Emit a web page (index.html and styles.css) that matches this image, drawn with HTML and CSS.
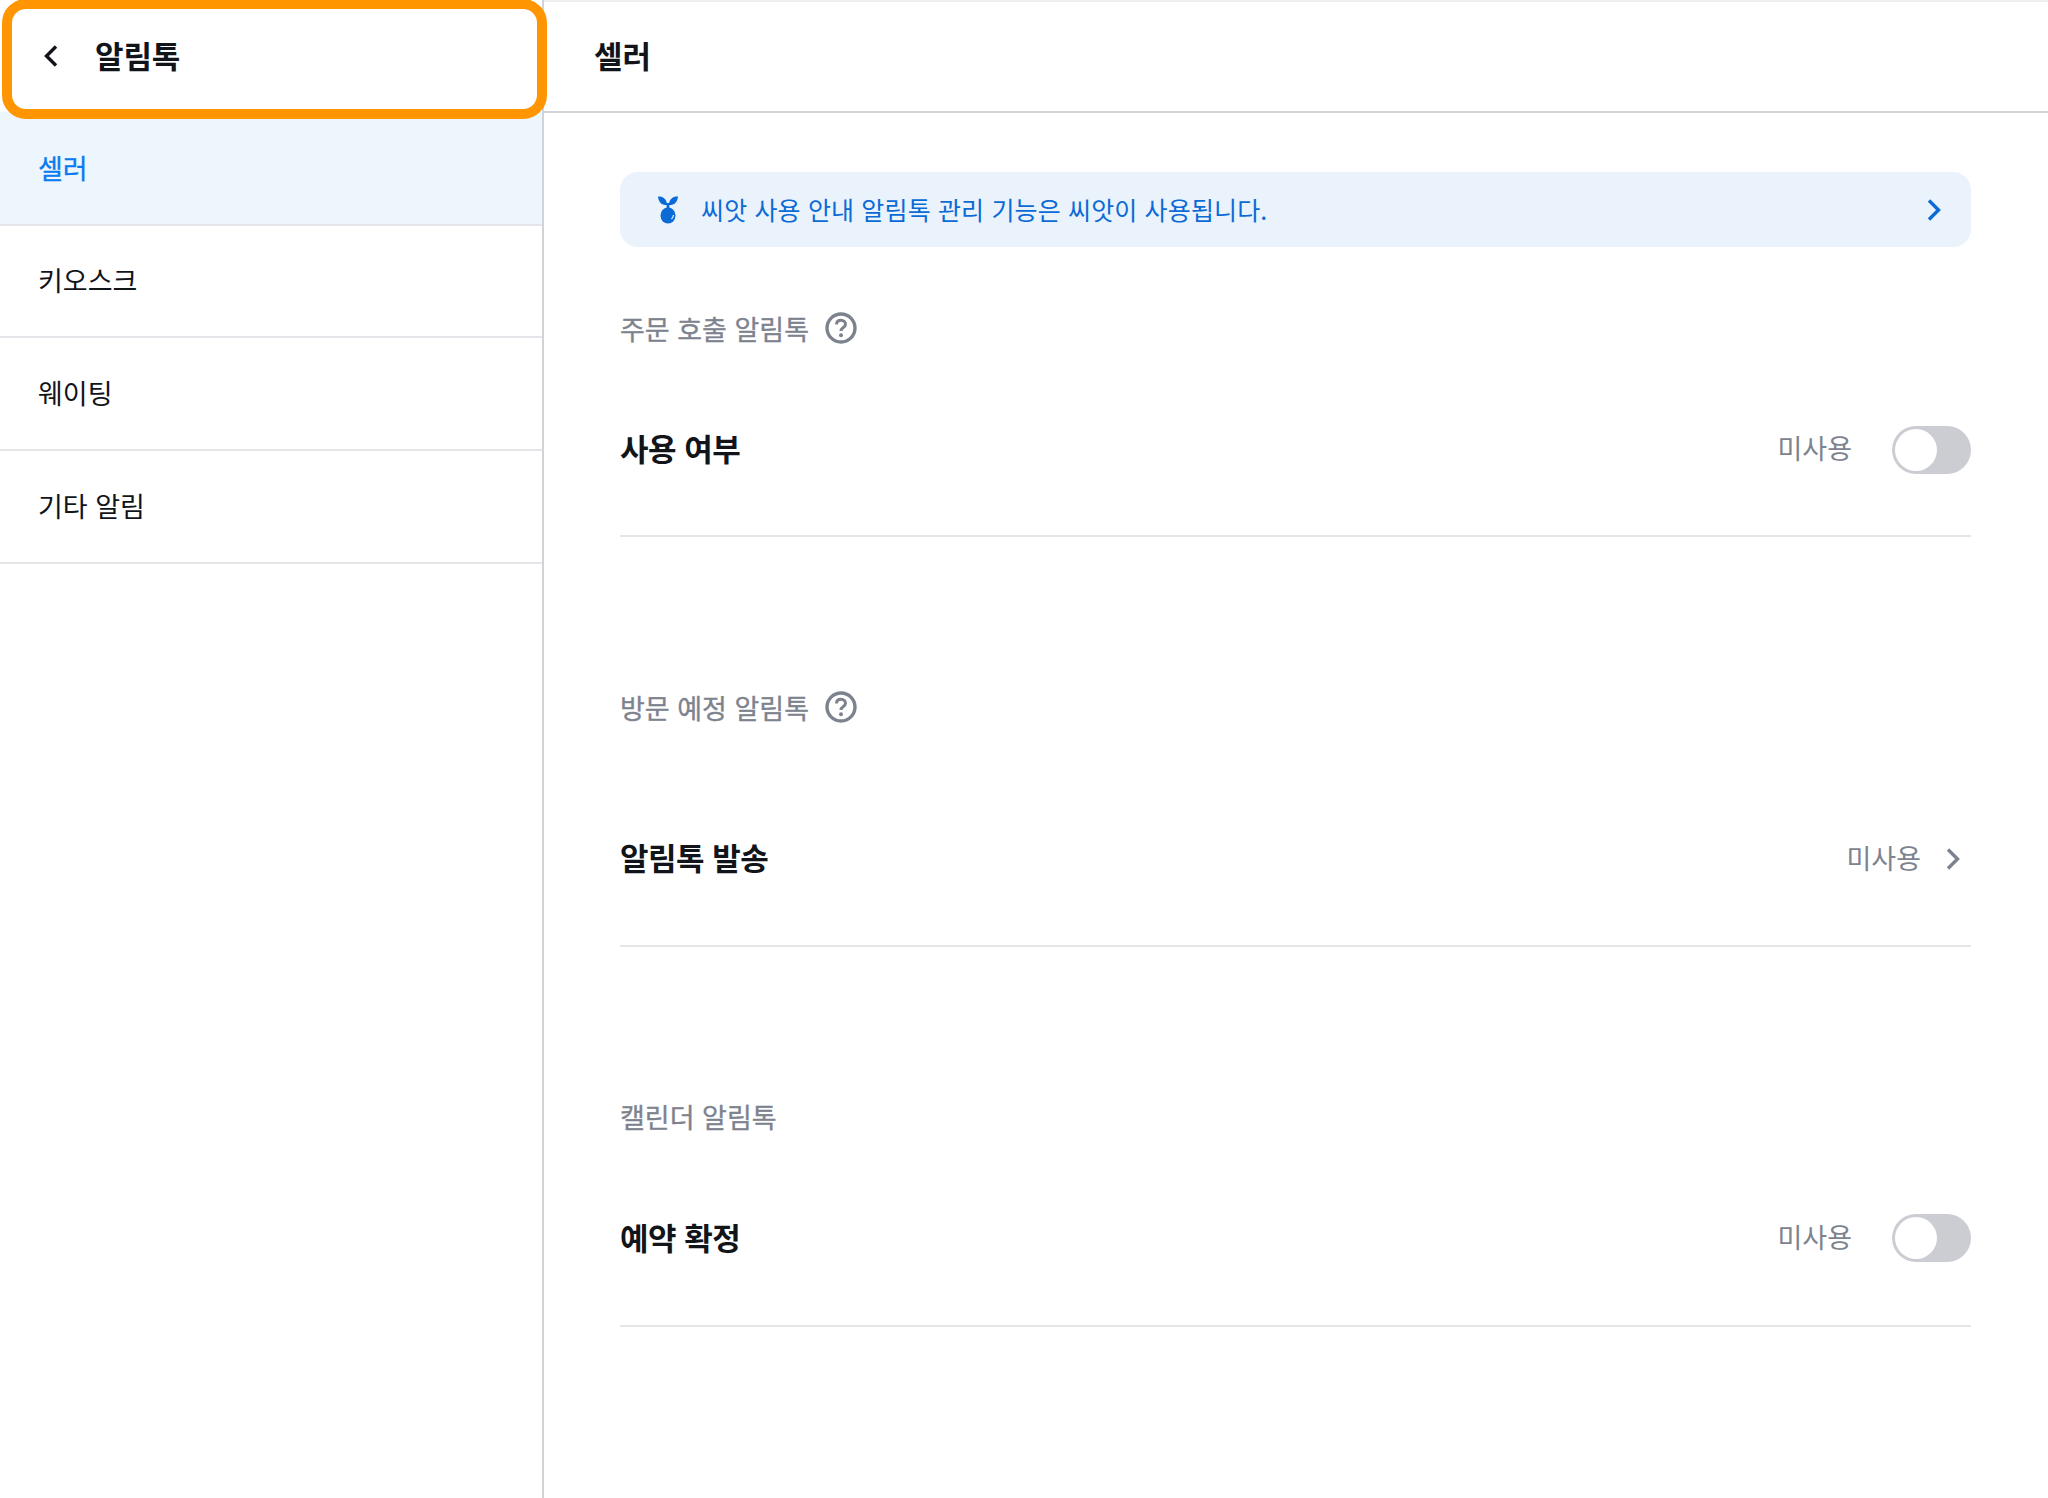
FILE: index.html
```html
<!DOCTYPE html>
<html lang="ko">
<head>
<meta charset="utf-8">
<title>알림톡</title>
<link rel="stylesheet" href="styles.css">
</head>
<body>
<div class="app">
  <aside class="sidebar">
    <header class="side-head">
      <svg class="back" width="16" height="22" viewBox="0 0 16 22"><path d="M14 1.5 L4.5 11 L14 20.5" fill="none" stroke="#111418" stroke-width="3.4"/></svg>
      <h1 class="head-title">알림톡</h1>
      <div class="highlight"></div>
    </header>
    <nav class="menu">
      <div class="menu-item active">셀러</div>
      <div class="menu-item">키오스크</div>
      <div class="menu-item">웨이팅</div>
      <div class="menu-item">기타 알림</div>
    </nav>
  </aside>
  <main class="main">
    <header class="main-head"><h2 class="head-title">셀러</h2></header>
    <div class="content">
      <div class="banner">
        <svg class="seed" width="24" height="28" viewBox="0 0 24 28"><path d="M2 0.5 C6 0 10.5 2 11.3 9 C6.5 9.5 2.5 7 2 0.5 Z M22 0.5 C18 0 13.5 2 12.7 9 C17.5 9.5 21.5 7 22 0.5 Z" fill="#0b6bd6"/><rect x="10.6" y="7" width="2.8" height="6" fill="#0b6bd6"/><ellipse cx="12" cy="19.5" rx="7.5" ry="8" fill="#0b6bd6"/><path d="M15.5 23 Q17.3 21.5 17.5 19" fill="none" stroke="#eaf2fc" stroke-width="1.2"/></svg>
        <span class="banner-text">씨앗 사용 안내 알림톡 관리 기능은 씨앗이 사용됩니다.</span>
        <svg class="banner-arrow" width="14" height="22" viewBox="0 0 14 22"><path d="M2 1.5 L11.5 11 L2 20.5" fill="none" stroke="#0b6bd6" stroke-width="3.4"/></svg>
      </div>

      <section class="section first">
        <div class="sec-title">주문 호출 알림톡
          <svg class="help" width="32" height="32" viewBox="0 0 32 32"><circle cx="16" cy="16" r="14" fill="none" stroke="#7d838e" stroke-width="3.4"/><path d="M11.5 12.5 C11.5 9.5 13.5 8.3 16 8.3 C18.5 8.3 20.5 10 20.5 12.3 C20.5 15.5 16 15.5 16 19" fill="none" stroke="#7d838e" stroke-width="3"/><circle cx="16" cy="23.2" r="2" fill="#7d838e"/></svg>
        </div>
        <div class="row">
          <span class="row-label">사용 여부</span>
          <span class="row-value toggle-gap">미사용</span>
          <span class="toggle"><span class="knob"></span></span>
        </div>
      </section>

      <section class="section second">
        <div class="sec-title">방문 예정 알림톡
          <svg class="help" width="32" height="32" viewBox="0 0 32 32"><circle cx="16" cy="16" r="14" fill="none" stroke="#7d838e" stroke-width="3.4"/><path d="M11.5 12.5 C11.5 9.5 13.5 8.3 16 8.3 C18.5 8.3 20.5 10 20.5 12.3 C20.5 15.5 16 15.5 16 19" fill="none" stroke="#7d838e" stroke-width="3"/><circle cx="16" cy="23.2" r="2" fill="#7d838e"/></svg>
        </div>
        <div class="row row-tall">
          <span class="row-label">알림톡 발송</span>
          <span class="row-value">미사용</span>
          <svg class="row-arrow" width="14" height="22" viewBox="0 0 14 22"><path d="M2 1.5 L11.5 11 L2 20.5" fill="none" stroke="#7d838e" stroke-width="3.4"/></svg>
        </div>
      </section>

      <section class="section third">
        <div class="sec-title">캘린더 알림톡</div>
        <div class="row row-last">
          <span class="row-label">예약 확정</span>
          <span class="row-value toggle-gap">미사용</span>
          <span class="toggle"><span class="knob"></span></span>
        </div>
      </section>
    </div>
  </main>
</div>
</body>
</html>
```
FILE: styles.css
```css
* { box-sizing: border-box; }
html, body { margin: 0; padding: 0; background: #fff; }
body { font-family: "Noto Sans CJK KR", "Noto Sans", sans-serif; color: #111418; }
.app { display: flex; height: 1498px; overflow: hidden; }
.sidebar { width: 544px; flex: none; border-right: 2px solid #d0d3d8; }
.side-head { position: relative; display: flex; align-items: center; height: 112px; padding: 0 0 0 42px; gap: 37px; }
.back { flex: none; }
.head-title { margin: 0 0 3px; font-size: 31px; font-weight: 700; line-height: 1.4; letter-spacing: -0.1px; }
.highlight { position: absolute; left: 2px; top: -1px; width: 545px; height: 120px; border: 10px solid #ff9500; border-radius: 24px; z-index: 2; }
.menu-item { height: 113px; display: flex; align-items: center; padding: 0 0 2px 38px; font-size: 27px; border-bottom: 2px solid #e3e5e8; }
.menu-item.active { height: 114px; background: #edf5fd; color: #0a7cf2; -webkit-text-stroke: 0.3px #0a7cf2; }
.menu-item.active + .menu-item { height: 112px; padding-bottom: 3px; }
.main { flex: 1; min-width: 0; border-top: 2px solid #eceef0; }
.main-head { height: 111px; padding-left: 50px; border-bottom: 2px solid #d0d3d8; display: flex; align-items: center; }
.content { padding: 59px 77px 0 76px; }
.banner { display: flex; align-items: center; height: 75px; padding: 0 30px 0 36px; border-radius: 18px; background: #eaf2fc; color: #0b6bd6; }
.seed { flex: none; }
.banner-text { flex: 1; margin: 0 0 2px 21px; font-size: 25px; letter-spacing: 0.15px; }
.sec-title { display: flex; align-items: center; gap: 16px; height: 40px; font-size: 27px; color: #7d838e; -webkit-text-stroke: 0.35px #7d838e; }
.help { flex: none; }
.row { display: flex; align-items: center; height: 189px; padding-top: 11px; border-bottom: 2px solid #e3e5e8; }
.first { margin-top: 61px; }
.first .toggle { margin-top: 5px; }
.first .row-value { margin-top: 1px; }
.second { margin-top: 150px; }
.row-tall { height: 220px; padding-top: 41px; }
.row-tall .row-value { margin-top: 2px; }
.third { margin-top: 149px; }
.row-last { height: 191px; padding-top: 12px; }
.row-last .toggle { margin-top: 3px; }
.row-label { flex: 1; font-size: 31px; font-weight: 700; letter-spacing: -0.5px; }
.row-value { font-size: 27px; color: #7d838e; }
.toggle-gap { margin-right: 40px; }
.toggle { display: block; width: 79px; height: 48px; padding: 3px; border-radius: 24px; background: #cbcdd2; }
.knob { display: block; width: 42px; height: 42px; border-radius: 50%; background: #fff; }
.row-arrow { margin: 5px 11px 0 25px; flex: none; }
```
